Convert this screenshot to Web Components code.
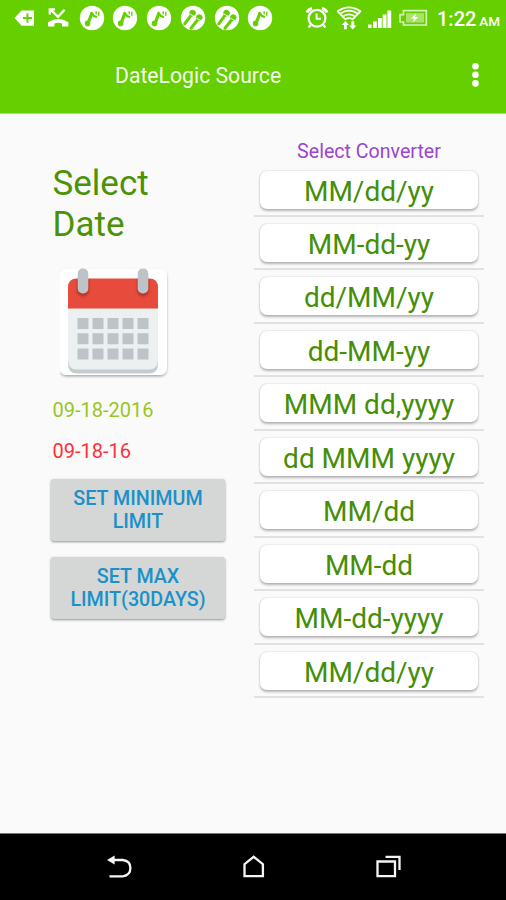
<!DOCTYPE html>
<html lang="en">
<head>
<meta charset="utf-8">
<title>DateLogic Source</title>
<style>
  html, body { margin: 0; height: 100%; }
  body { font-family: Roboto, "Liberation Sans", sans-serif; background: #fafafa; overflow: hidden; }
</style>
</head>
<body>
<date-app></date-app>
<script>
const define = (name, html) => customElements.define(name, class extends HTMLElement {
  constructor() {
    super();
    const t = document.createElement('template');
    t.innerHTML = html;
    this.attachShadow({ mode: 'open' }).append(t.content.cloneNode(true));
  }
});

const GREEN = '#66cf00';
const note = `<circle cx="14" cy="14" r="12.2" fill="#fff"/><g stroke="${GREEN}" fill="none" stroke-linecap="round"><path d="M10 19.5L13.6 10" stroke-width="3.2"/><circle cx="9.6" cy="19.4" r="1.4" stroke-width="2.8"/><path d="M13.6 8.8q2 4 4.6 4" stroke-width="2.2"/><path d="M18.2 7.8v2M20.8 8.2v3" stroke-width="1.4"/></g>`;
const mics = `<circle cx="14" cy="14" r="12.2" fill="#fff"/><g stroke="${GREEN}" fill="${GREEN}" stroke-linecap="round"><circle cx="13.5" cy="9" r="2.8"/><circle cx="20.3" cy="13.5" r="2.8"/><path d="M11.8 11.6L5.7 19.8M18.5 16L12 24.2" stroke-width="3"/></g><path d="M10.3 9.7l5 2.6M17.2 14.2l4.8 2.4" stroke="#fff" stroke-width=".8"/>`;
const icons = {
  back: [28, `<path d="M4.5 14L11.6 6.5H24V21.8H11.6Z" fill="#fff"/><path d="M17.5 9.3v9.4M12.9 14h9.2" stroke="${GREEN}" stroke-width="1.9"/>`],
  missed: [28, `<path d="M4 22.5v-4.2q10.2-6.6 20.4 0v4.2h-6.4v-3q-3.8-1.3-7.6 0v3z" fill="#fff"/><path d="M6.8 5.8L14 12.8 20.6 5.8M5.8 10.4V5.4h5.2" fill="none" stroke="#fff" stroke-width="2.3"/>`],
  note: [28, note],
  mics: [28, mics],
  alarm: [28, `<g fill="none" stroke="#fff"><circle cx="14" cy="14.3" r="8.4" stroke-width="2.2"/><path d="M13.6 9.5v5.3h4.3" stroke-width="1.9"/><path d="M7.8 20.7l-2.2 2.8M20.2 20.7l2.2 2.8" stroke-width="2.2"/><path d="M4 8.6q1.2-3.5 5-4.2M24 8.6q-1.2-3.5-5-4.2" stroke-width="3"/></g>`],
  wifi: [28, `<g fill="none" stroke="#fff" stroke-width="1.7" stroke-linejoin="round"><path d="M2.6 7.3q11.4-8 22.8 0L17.6 15.3q-3.6-2.4-7.2 0z"/><path d="M4.8 10q9.2-6.6 18.4 0"/><path d="M7.4 12.8q6.6-5 13.2 0"/></g><path d="M10.4 17l3.6 4h-2.2v4.2H9V21H6.8zM17.8 25.4l-3.6-4h2.2v-4.2h2.8v4.2h2.2z" fill="#fff"/>`],
  signal: [28, `<g fill="#fff"><rect x="2" y="20.5" width="3.5" height="3.5"/><rect x="7" y="17.5" width="3.8" height="6.5"/><rect x="12" y="14" width="3.8" height="10"/><rect x="16.7" y="10.4" width="3.8" height="13.6"/><rect x="21.4" y="6.5" width="3.8" height="17.5"/></g>`],
  battery: [30, `<path d="M5.5 6.7H28.3V21H5.5V18H2V10.6h3.5z" fill="none" stroke="#d5f2b6" stroke-width="1.7"/><rect x="8" y="9.2" width="18" height="9.4" fill="#a9e36c"/><path d="M18 9.4l-5 5h3.2l-1.6 4 5.6-5.3h-3.4z" fill="#fff"/>`]
};

customElements.define('status-icon', class extends HTMLElement {
  connectedCallback() {
    const [w, body] = icons[this.getAttribute('name')];
    this.attachShadow({ mode: 'open' }).innerHTML =
      `<style>:host{display:block;flex:none}svg{display:block}</style><svg width="${w}" height="28" viewBox="0 0 ${w} 28">${body}</svg>`;
  }
});

define('status-bar', `
<style>
  :host { display: flex; align-items: center; justify-content: space-between; height: 36px; padding: 0 6px 0 10px; color: #fff; }
  .group { display: flex; align-items: center; gap: 5.75px; }
  .right { gap: 2.5px; }
  status-icon[name=battery] { margin-left: 1.5px; }
  status-icon[name=wifi] { margin-left: 2px; }
  .time { display: flex; align-items: baseline; justify-content: space-between; width: 63px; font-size: 20px; font-weight: 500; white-space: nowrap; margin-left: 7px; line-height: 24px; padding-top: 4px; }
  small { font-size: 13.5px; }
</style>
<div class="group">
  <status-icon name="back"></status-icon><status-icon name="missed"></status-icon>
  <status-icon name="note"></status-icon><status-icon name="note"></status-icon><status-icon name="note"></status-icon>
  <status-icon name="mics"></status-icon><status-icon name="mics"></status-icon><status-icon name="note"></status-icon>
</div>
<div class="group right">
  <status-icon name="alarm"></status-icon><status-icon name="wifi"></status-icon>
  <status-icon name="signal"></status-icon><status-icon name="battery"></status-icon>
  <div class="time"><span>1:22</span><small>AM</small></div>
</div>`);

define('app-bar', `
<style>
  :host { display: flex; align-items: center; justify-content: space-between; height: 78px; padding: 0 27px 0 115px; color: #f4fcea; font-size: 21.2px; }
  svg { display: block; }
</style>
<slot></slot>
<svg width="7" height="26"><g fill="#fff"><circle cx="3.5" cy="4.2" r="3.3"/><circle cx="3.5" cy="12.8" r="3.3"/><circle cx="3.5" cy="21.4" r="3.3"/></g></svg>`);

define('calendar-button', `
<style>:host { display: block; width: 116px; height: 118px; } svg { display: block; }</style>
<svg width="116" height="118" viewBox="0 0 116 118">
  <defs>
    <filter id="s" x="-10%" y="-10%" width="120%" height="125%"><feDropShadow dx="0" dy="1.6" stdDeviation="1.3" flood-opacity=".32"/></filter>
    <filter id="b" x="-50%" y="-50%" width="200%" height="200%"><feGaussianBlur stdDeviation="1.1"/></filter>
    <clipPath id="c"><path d="M8 41V20q0-9 9-9H89q9 0 9 9v21z"/></clipPath>
  </defs>
  <rect x="-.5" y="3" width="107.5" height="106" rx="7" fill="#fff" filter="url(#s)"/>
  <g transform="translate(0 1.5)">
    <path d="M8 41H98V96q0 10-9 10H17q-9 0-9-10z" fill="#c6cbce"/>
    <path d="M8 41H98V92q0 10-9 10H17q-9 0-9-10z" fill="#ecf0f1"/>
    <path d="M8 41V20q0-9 9-9H89q9 0 9 9v21z" fill="#e64b3c"/>
    <g clip-path="url(#c)" filter="url(#b)" fill="#b93428"><rect x="17" y="8" width="12" height="21" rx="6"/><rect x="77" y="8" width="12" height="21" rx="6"/></g>
    <g fill="#bdc3c7"><rect x="17.7" y="1" width="10.6" height="25" rx="5"/><rect x="77.7" y="1" width="10.6" height="25" rx="5"/></g>
    <path d="M23 50.5v41.4M38 50.5v41.4M53 50.5v41.4M68 50.5v41.4M83 50.5v41.4" stroke="#bdc3c7" stroke-width="11" stroke-dasharray="11 4.2"/>
  </g>
</svg>`);

define('limit-button', `
<style>
  :host { display: flex; align-items: center; justify-content: center; box-sizing: border-box; width: 174px; height: 62px; background: #d5d7d6; border-radius: 3px; box-shadow: 0 1px 2.5px rgba(0,0,0,.42); color: #1b91c9; font-size: 19.7px; line-height: 23px; font-weight: 500; text-align: center; }
</style><div><slot></slot></div>`);

define('date-panel', `
<style>
  :host { display: flex; flex-direction: column; width: 174px; padding-top: 49px; }
  h1 { margin: 0 0 21px 1.5px; font-size: 35px; line-height: 41px; font-weight: 400; color: #4c9206; }
  calendar-button { margin: 0 0 14px 9px; }
  .date { margin: 0 0 17px 1.5px; font-size: 20px; line-height: 24px; }
  .long { color: #99c724; } .short { color: #ff3038; margin-bottom: 16px; }
  limit-button + limit-button { margin-top: 16px; }
</style>
<h1>Select<br>Date</h1>
<calendar-button></calendar-button>
<div class="date long">09-18-2016</div>
<div class="date short">09-18-16</div>
<limit-button>SET MINIMUM<br>LIMIT</limit-button>
<limit-button>SET MAX<br>LIMIT(30DAYS)</limit-button>`);

define('format-row', `
<style>
  :host { display: block; box-sizing: border-box; height: 53.45px; padding: 7px 6px 0; border-bottom: 2px solid #e1e1e1; }
  div { height: 38px; border-radius: 7px; background: #fff; box-shadow: 0 1.5px 2.5px rgba(0,0,0,.28), 0 0 1.5px rgba(0,0,0,.13); color: #458e08; font-size: 28px; line-height: 41px; text-align: center; white-space: nowrap; }
</style><div><slot></slot></div>`);

define('converter-list', `
<style>
  :host { display: block; width: 230px; padding-top: 26px; }
  h2 { margin: 0; font-size: 19.6px; line-height: 24px; height: 23.6px; font-weight: 400; color: #9a45cd; text-align: center; }
</style>
<h2>Select Converter</h2>
<format-row>MM/dd/yy</format-row><format-row>MM-dd-yy</format-row>
<format-row>dd/MM/yy</format-row><format-row>dd-MM-yy</format-row>
<format-row>MMM dd,yyyy</format-row><format-row>dd MMM yyyy</format-row>
<format-row>MM/dd</format-row><format-row>MM-dd</format-row>
<format-row>MM-dd-yyyy</format-row><format-row>MM/dd/yy</format-row>`);

define('nav-bar', `
<style>
  :host { display: flex; align-items: center; justify-content: space-between; box-sizing: border-box; height: 67px; padding: 0 103px 0 104px; background: #000; border-top: 1px solid #777; }
  svg { display: block; fill: none; stroke: #f5f5f5; stroke-width: 2.3; }
</style>
<svg width="30" height="30"><path d="M9.5 8h9.3q7.6.8 7.6 8t-7.6 8.3H5.5"/><path d="M3 8l7.6-4.5v9z" fill="#f5f5f5" stroke="none"/></svg>
<svg width="30" height="30"><path d="M5.5 24.2V12.2L14.7 4.8 23.9 12.2V24.2z"/></svg>
<svg width="30" height="30"><path d="M4.5 9.5h17.5v14.7h-17.5zM12.5 4.8H26.5V18"/></svg>`);

define('date-app', `
<style>
  :host { display: flex; flex-direction: column; width: 506px; height: 900px; background: #fafafa; }
  header { background: ${GREEN}; height: 113px; flex: none; border-bottom: 1px solid #b2dc88; }
  main { flex: 1; display: flex; gap: 29px; padding-left: 51px; }
</style>
<header><status-bar></status-bar><app-bar>DateLogic Source</app-bar></header>
<main><date-panel></date-panel><converter-list></converter-list></main>
<nav-bar></nav-bar>`);
</script>
</body>
</html>
